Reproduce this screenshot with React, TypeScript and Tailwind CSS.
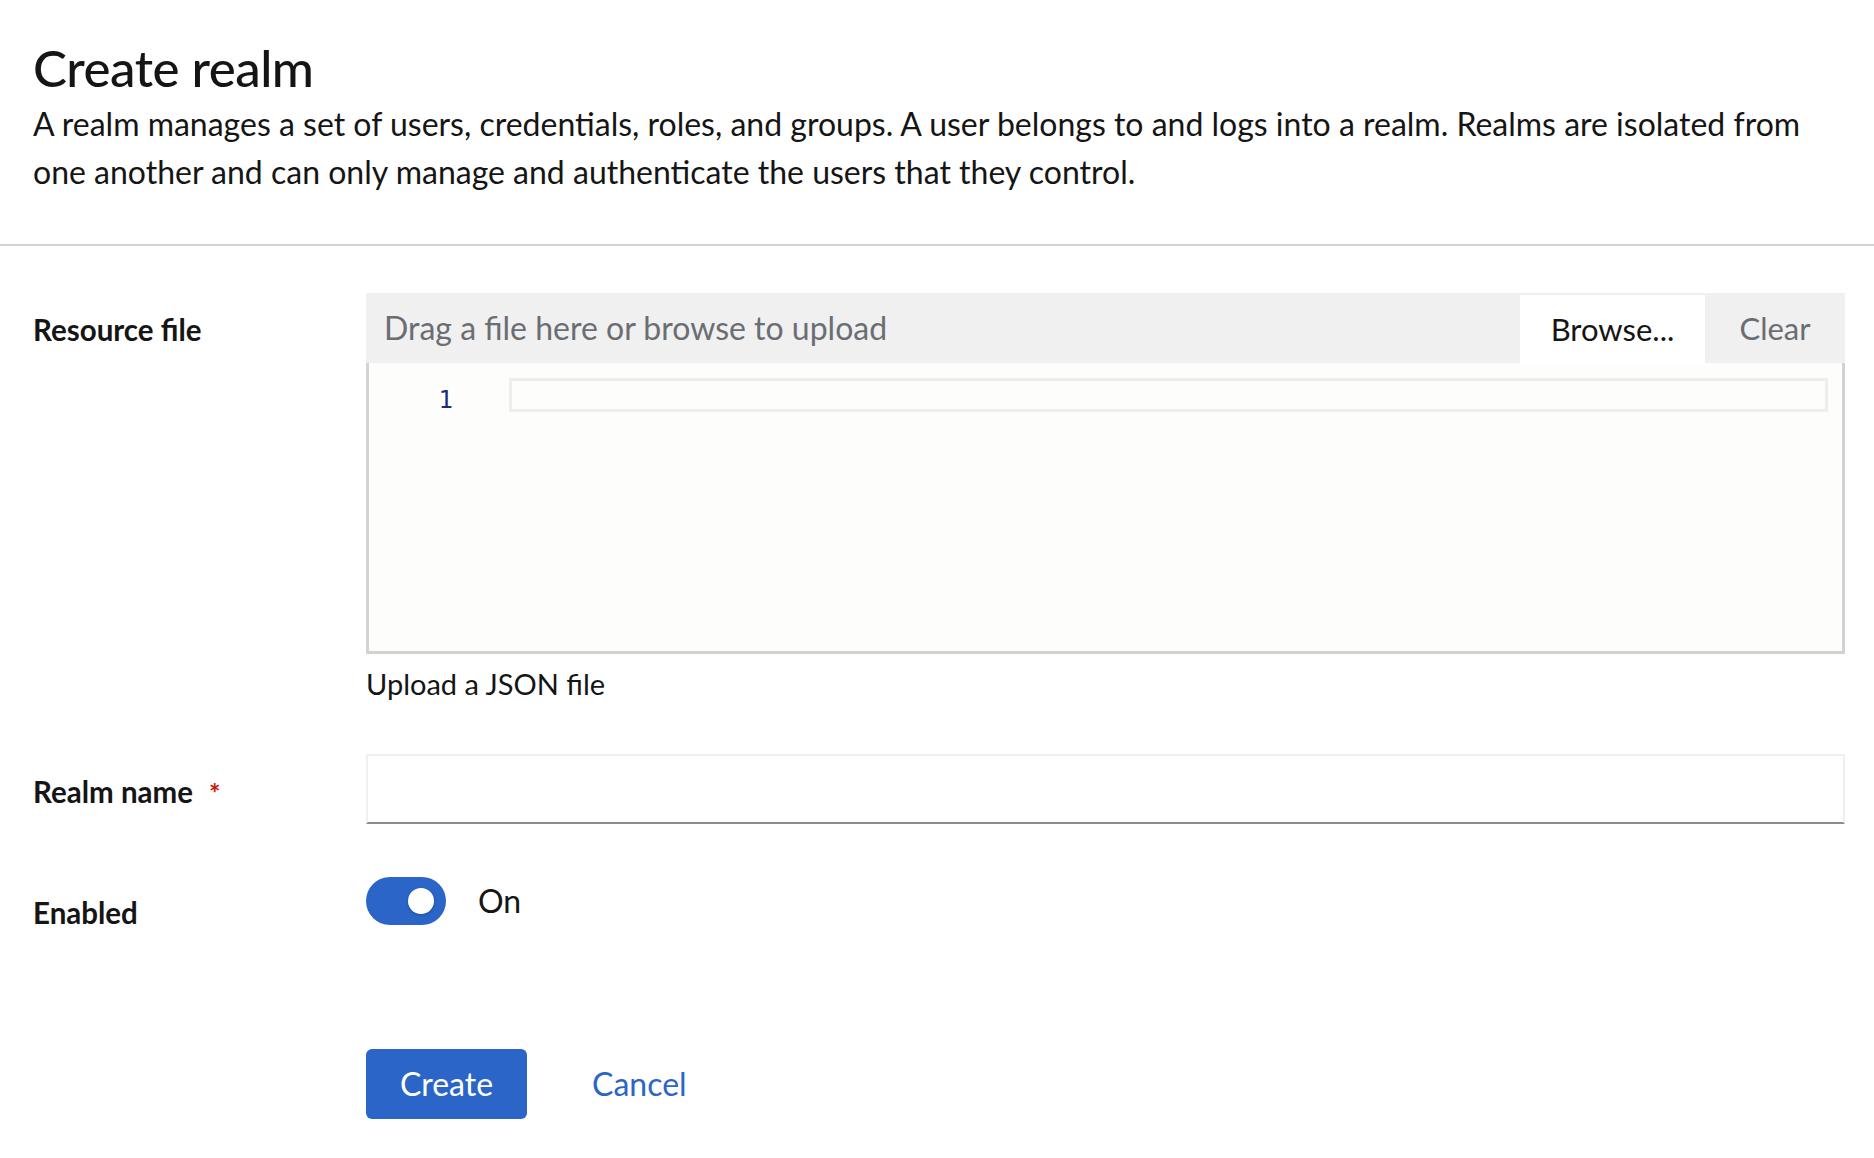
import React from "react";

const font = { fontFamily: "Lato, 'Liberation Sans', sans-serif" };

const FormRow = ({
  label,
  required,
  labelClass,
  children,
}: {
  label: string;
  required?: boolean;
  labelClass?: string;
  children: React.ReactNode;
}) => (
  <div className="flex w-full">
    <div className={`w-[333px] shrink-0 ${labelClass ?? ""}`}>
      <span className="text-[29.5px] font-bold text-[#151515]">{label}</span>
      {required && (
        <span className="ml-[16px] text-[27px] font-bold text-[#c9190b]">*</span>
      )}
    </div>
    <div className="min-w-0 flex-1">{children}</div>
  </div>
);

const App = () => {
  const [enabled, setEnabled] = React.useState(true);

  return (
    <div className="min-h-[1158px] w-full bg-white text-[#151515]" style={font}>
      <div className="px-[33px] pt-[37px] pb-[48px]">
        <h1 className="text-[51px] font-medium leading-[1.2] tracking-[-0.5px]">
          Create realm
        </h1>
        <p className="mt-[2px] text-[32px] leading-[48px] text-[#151515]">
          A realm manages a set of users, credentials, roles, and groups. A user belongs to and logs
          into a realm. Realms are isolated from one another and can only manage and authenticate
          the users that they control.
        </p>
      </div>
      <div className="h-[2px] w-full bg-[#d2d2d2]" />

      <div className="flex flex-col pl-[33px] pr-[29px] pt-[47px]">
        <FormRow label="Resource file" labelClass="pt-[15px]">
          <div className="flex h-[70px] items-stretch bg-[#f0f0f0]">
            <div className="flex flex-1 items-center pl-[18px] text-[32px] text-[#6a6e73]">
              Drag a file here or browse to upload
            </div>
            <button className="mt-[2px] flex w-[185px] items-center justify-center bg-white text-[31px] text-[#151515]">
              Browse...
            </button>
            <button className="flex w-[140px] items-center justify-center text-[31px] text-[#6a6e73]">
              Clear
            </button>
          </div>
          <div className="flex h-[291px] border-x-[3px] border-b-[3px] border-[#d2d2d2] bg-[#fdfdfb]">
            <div
              className="w-[140px] pt-[19px] pr-[56px] text-right text-[24px] text-[#1b2a80]"
              style={{ fontFamily: "'DejaVu Sans Mono', monospace" }}
            >
              1
            </div>
            <div className="flex-1 pt-[15px] pr-[14px]">
              <div className="h-[34px] border-[3px] border-[#eeeeee]" />
            </div>
          </div>
          <div className="pt-[12px] text-[29px] leading-[36px]">Upload a JSON file</div>
        </FormRow>

        <div className="mt-[52px]">
          <FormRow label="Realm name" required labelClass="pt-[16px]">
            <div className="h-[70px] border-[2px] border-[#f0f0f0] border-b-[#8a8d90] bg-white" />
          </FormRow>
        </div>

        <div className="mt-[53px]">
          <FormRow label="Enabled" labelClass="pt-[14px]">
            <div className="flex items-center gap-[32px]">
              <button
                onClick={() => setEnabled(!enabled)}
                className={`flex h-[48px] w-[80px] items-center rounded-full px-[12px] ${
                  enabled ? "justify-end bg-[#2b65c7]" : "justify-start bg-[#8a8d90]"
                }`}
              >
                <span className="h-[26px] w-[26px] rounded-full bg-white shadow-[0_1px_3px_rgba(0,0,0,0.25)]" />
              </button>
              <span className="text-[32px]">{enabled ? "On" : "Off"}</span>
            </div>
          </FormRow>
        </div>

        <div className="mt-[114px] flex pl-[333px]">
          <button className="h-[70px] w-[161px] rounded-[6px] bg-[#2b65c7] text-[32px] text-white">
            Create
          </button>
          <button className="ml-[65px] text-[32px] text-[#2b65c7]">Cancel</button>
        </div>
      </div>
    </div>
  );
};

export default App;
